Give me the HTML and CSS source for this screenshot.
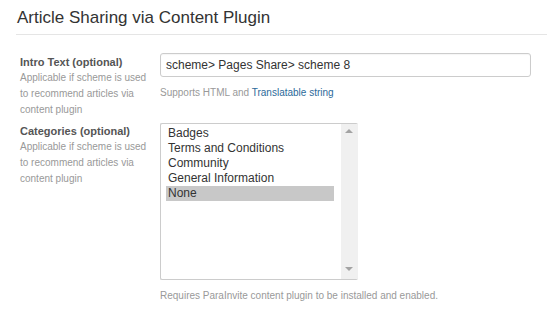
FILE: index.html
```
<!DOCTYPE html>
<html>
<head>
<meta charset="utf-8">
<link rel="stylesheet" href="styles.css">
</head>
<body>
<div class="page">
  <h2 class="title">Article Sharing via Content Plugin</h2>
  <div class="form">
    <div class="row row-intro">
      <div class="label-col">
        <div class="label">Intro Text (optional)</div>
        <div class="desc">Applicable if scheme is used to recommend articles via content plugin</div>
      </div>
      <div class="control-col">
        <div class="input">scheme&gt; Pages Share&gt; scheme 8</div>
        <div class="help">Supports HTML and <a class="link">Translatable string</a></div>
      </div>
    </div>
    <div class="row row-cat">
      <div class="label-col">
        <div class="label">Categories (optional)</div>
        <div class="desc">Applicable if scheme is used to recommend articles via content plugin</div>
      </div>
      <div class="control-col">
        <div class="listbox">
          <div class="options">
            <div class="option">Badges</div>
            <div class="option">Terms and Conditions</div>
            <div class="option">Community</div>
            <div class="option">General Information</div>
            <div class="option selected">None</div>
          </div>
          <div class="scrollbar">
            <span class="arrow up"></span>
            <span class="arrow down"></span>
          </div>
        </div>
        <div class="help help-req">Requires ParaInvite content plugin to be installed and enabled.</div>
      </div>
    </div>
  </div>
</div>
</body>
</html>
```
FILE: styles.css
```
* { box-sizing: border-box; }
html, body { margin: 0; padding: 0; background: #fff; }
body { font-family: "Liberation Sans", Arial, sans-serif; color: #333; }
.page { padding: 0 0 0 16px; }
.title {
  margin: 0;
  padding: 7px 0 6px 1px;
  font-size: 17px;
  line-height: 21px;
  font-weight: normal;
  color: #333;
  border-bottom: 1px solid #e5e5e5;
}
.form { padding: 18px 0 0 4px; }
.row { display: grid; grid-template-columns: 140px 371px; }
.row-intro { margin-bottom: 5px; }
.label-col { padding-top: 1px; }
.row-cat .label-col { padding-top: 0; }
.label { font-size: 11px; font-weight: bold; line-height: 16px; color: #555; }
.desc { font-size: 10px; line-height: 16px; color: #999; width: 130px; }
.input {
  height: 24px;
  border: 1px solid #ccc;
  border-radius: 3px;
  padding: 0 5px;
  font-size: 12px;
  line-height: 22px;
  color: #333;
  box-shadow: inset 0 1px 1px rgba(0,0,0,0.04);
}
.help { font-size: 10px; line-height: 16px; color: #999; margin-top: 8px; }
.link { color: #2c6a9a; text-decoration: none; }
.listbox {
  width: 198px;
  height: 157px;
  border: 1px solid #ccc;
  border-right: 0;
  border-radius: 2px;
  display: flex;
  overflow: hidden;
}
.options { flex: 1; padding: 2px 7px 0 5px; }
.option { font-size: 12px; line-height: 15px; height: 15px; padding-left: 2px; color: #333; white-space: nowrap; }
.option.selected { background: #c8c8c8; }
.scrollbar {
  width: 17px;
  background: #f0f0f0;
  position: relative;
  margin-top: -1px;
}
.arrow { position: absolute; left: 4px; width: 0; height: 0; border-left: 4px solid transparent; border-right: 4px solid transparent; }
.arrow.up { top: 6px; border-bottom: 4px solid #a3a3a3; }
.arrow.down { bottom: 8px; border-top: 4px solid #a3a3a3; }
.help-req { margin-top: 8px; }
```
